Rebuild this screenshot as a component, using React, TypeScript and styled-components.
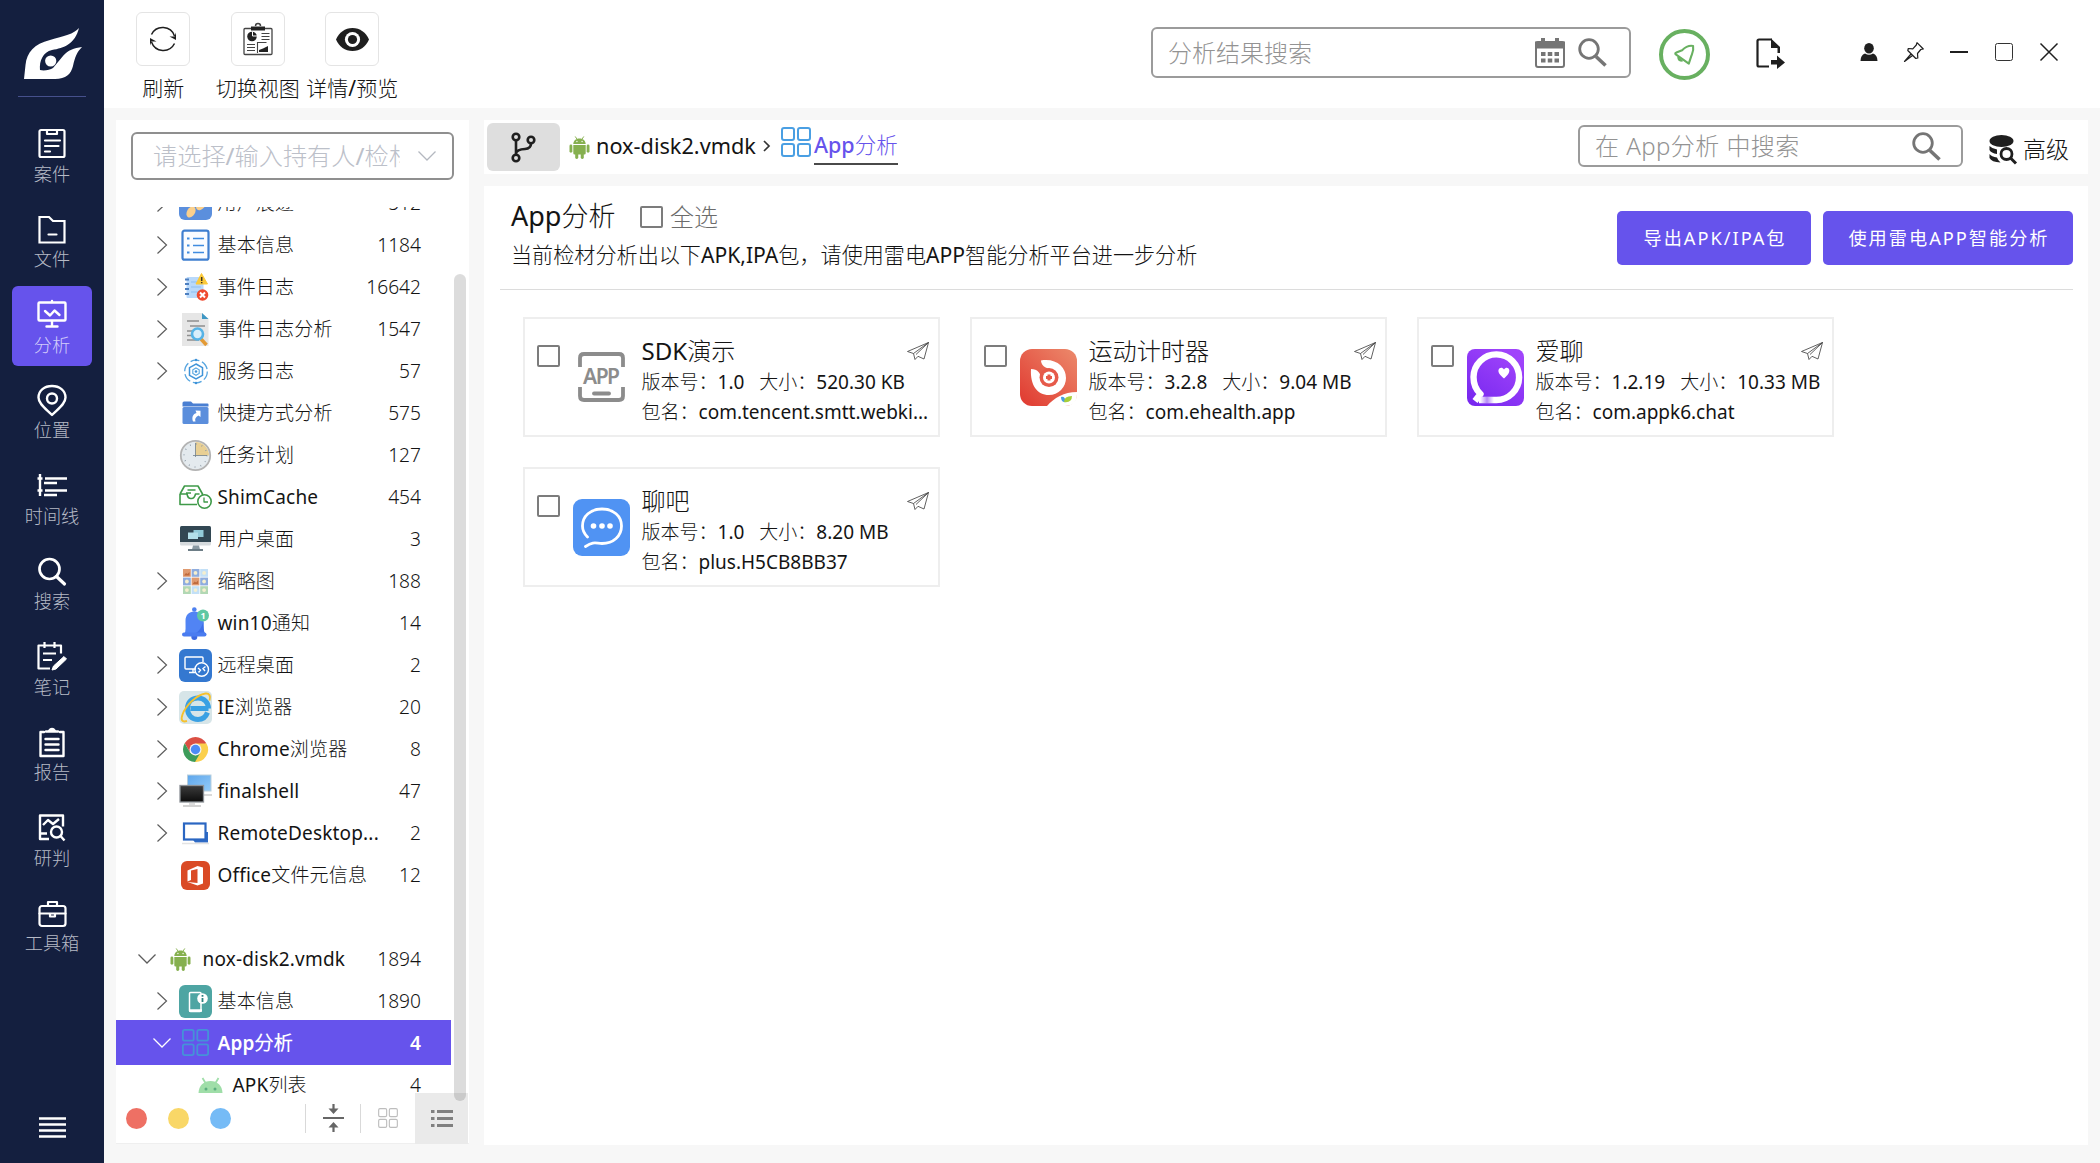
import React from "react";
import styled, { createGlobalStyle, css } from "styled-components";

const CJK = `"Noto Sans", "Noto Sans CJK SC Light", "Noto Sans CJK SC", sans-serif`;
const PURPLE = "#6653ec";

const Global = createGlobalStyle`
  * { box-sizing: border-box; }
  body { margin: 0; background: #f7f7f7; overflow: hidden; font-family: ${CJK}; color: #141414; }
  svg { display: block; flex: none; overflow: visible; }
`;

const Shell = styled.div`
  display: flex;
  width: 2100px;
  height: 1163px;
`;

/* ---------- left navigation ---------- */
const Nav = styled.nav`
  width: 104px;
  height: 100%;
  background: #141f3f;
  display: flex;
  flex-direction: column;
  align-items: center;
  padding: 28px 12px 25px;
`;
const LogoSlot = styled.div`
  padding-left: 2px;
`;
const NavRule = styled.div`
  width: 68px;
  height: 1px;
  margin: 17px 0 18px;
  background: #46508c;
`;
const NavList = styled.div`
  display: flex;
  flex-direction: column;
  gap: 5.5px;
  flex: 1;
`;
const NavItem = styled.div<{ $active?: boolean }>`
  width: 80px;
  height: 80px;
  border-radius: 6px;
  padding-top: 13px;
  display: flex;
  flex-direction: column;
  align-items: center;
  background: ${(p) => (p.$active ? PURPLE : "transparent")};
  color: #fff;
`;
const NavLabel = styled.span<{ $active?: boolean }>`
  margin-top: 0.7px;
  font-size: 18.2px;
  line-height: 28px;
  white-space: nowrap;
  color: ${(p) => (p.$active ? "#d2ccfa" : "#b6bac6")};
`;

/* ---------- top header ---------- */
const Body = styled.div`
  flex: 1;
  min-width: 0;
  display: flex;
  flex-direction: column;
`;
const Header = styled.header`
  height: 108px;
  background: #fff;
  display: flex;
  padding: 12px 29px 0 12px;
`;
const Tool = styled.div`
  width: 94.5px;
  display: flex;
  flex-direction: column;
  align-items: center;
`;
const ToolBox = styled.div`
  width: 54px;
  height: 54px;
  border: 1px solid #e4e4e4;
  border-radius: 6px;
  display: grid;
  place-items: center;
`;
const ToolLabel = styled.span`
  margin-top: 8px;
  font-size: 21px;
  line-height: 28px;
  white-space: nowrap;
`;
const HeaderRight = styled.div`
  margin-left: auto;
  display: flex;
  align-items: flex-start;
`;
const SearchField = styled.div<{ $w: number; $h: number; $pl: number; $pr: number }>`
  width: ${(p) => p.$w}px;
  height: ${(p) => p.$h}px;
  padding: 0 ${(p) => p.$pr}px 0 ${(p) => p.$pl}px;
  border: 2px solid #9b9b9b;
  border-radius: 6px;
  display: flex;
  align-items: center;
  font-size: 24px;
  color: #939393;
  svg { color: #757575; }
`;
const FieldText = styled.span<{ $ls?: number }>`
  flex: 1;
  white-space: nowrap;
  line-height: 34px;
  font-weight: 300;
  letter-spacing: ${(p) => p.$ls ?? 0}px;
`;
const HeaderSearch = styled.div`
  padding-top: 15px;
`;
const BellRing = styled.div`
  width: 51px;
  height: 51px;
  margin: 17px 46px 0 28px;
  border: 4.5px solid #68b060;
  border-radius: 50%;
  display: grid;
  place-items: center;
  color: #68b060;
`;
const ExportButton = styled.div`
  padding-top: 26px;
  width: 90px;
`;
const WindowButtons = styled.div`
  display: flex;
  padding-top: 25px;
  color: #1f1f1f;
`;
const WinButton = styled.div`
  width: 45px;
  height: 30px;
  display: grid;
  place-items: center;
`;

/* ---------- workspace ---------- */
const Workspace = styled.div`
  flex: 1;
  display: flex;
  gap: 15px;
  padding: 12px 12px 18px;
`;
const Side = styled.aside`
  position: relative;
  width: 353px;
  height: 1024px;
  background: #fff;
  display: flex;
  flex-direction: column;
`;
const HolderSelect = styled.div`
  margin: 12px 15px 27px;
  height: 48px;
  padding: 0 16px 0 20px;
  border: 2px solid #8f8f8f;
  border-radius: 6px;
  display: flex;
  align-items: center;
  justify-content: space-between;
  color: #b4b8c0;
`;
const HolderText = styled.span`
  width: 247px;
  overflow: hidden;
  white-space: nowrap;
  font-size: 24.200px;
  line-height: 36px;
  color: #bcc0c9;
`;
const Tree = styled.div`
  height: 886px;
  overflow: hidden;
`;
const TreeBody = styled.div`
  width: 335px;
  margin-top: -25px;
`;
const TreeRow = styled.div<{ $active?: boolean }>`
  height: 42px;
  padding-right: 30px;
  display: flex;
  align-items: center;
  font-size: 19px;
  line-height: 28px;
  ${(p) =>
    p.$active &&
    css`
      height: 45px;
      margin: -2px 0 -1px;
      background: ${PURPLE};
      color: #fff;
      font-weight: 600;
    `}
`;
const Caret = styled.span<{ $w: number }>`
  width: ${(p) => p.$w}px;
  display: flex;
  justify-content: flex-end;
`;
const NodeIcon = styled.span<{ $ml: number; $w: number }>`
  width: ${(p) => p.$w}px;
  margin-left: ${(p) => p.$ml}px;
  display: flex;
  justify-content: center;
`;
const NodeName = styled.span<{ $ml: number }>`
  margin-left: ${(p) => p.$ml + 0.5}px;
  white-space: nowrap;
  letter-spacing: 0.18px;
`;
const NodeCount = styled.span<{ $active?: boolean }>`
  margin-left: auto;
  font-size: 19.2px;
  font-weight: ${(p) => (p.$active ? 600 : 300)};
`;
const Thumb = styled.div`
  position: absolute;
  left: 338px;
  top: 154px;
  width: 12px;
  height: 827px;
  border-radius: 6px;
  background: rgba(0, 0, 0, 0.137);
`;
const Footer = styled.div`
  height: 51px;
  display: flex;
  align-items: center;
  border-bottom: 1px solid #efefef;
`;
const Dot = styled.span<{ $c: string }>`
  width: 21px;
  height: 21px;
  margin-left: 10px;
  margin-right: 11px;
  border-radius: 50%;
  background: ${(p) => p.$c};
`;
const FootSpace = styled.span`
  flex: 1;
`;
const FootCell = styled.span<{ $w: number }>`
  width: ${(p) => p.$w}px;
  height: 29px;
  display: grid;
  place-items: center;
  border-left: 1px solid #d9d9d9;
`;
const ListToggle = styled.span`
  width: 53px;
  height: 51px;
  margin-right: 1px;
  display: grid;
  place-items: center;
  background: #eaeaea;
  color: #808080;
`;

/* ---------- content ---------- */
const Content = styled.main`
  flex: 1;
  display: flex;
  flex-direction: column;
  gap: 12px;
`;
const CrumbBar = styled.div`
  height: 54px;
  padding: 0 19px 0 3px;
  background: #fff;
  display: flex;
  align-items: center;
`;
const BranchButton = styled.div`
  width: 73px;
  height: 48px;
  margin-right: 9px;
  border-radius: 6px;
  background: #dedede;
  display: grid;
  place-items: center;
`;
const Crumb = styled.span`
  margin: -2px 7px 0 6px;
  font-size: 21.7px;
  line-height: 30px;
`;
const CrumbCurrent = styled.span`
  margin: 3px 0 0 3px;
  height: 33px;
  font-size: 21.5px;
  line-height: 26px;
  border-bottom: 2px solid #4a4a4a;
  color: ${PURPLE};
  b { font-weight: 500; }
`;
const CrumbGrid = styled.span`
  margin: -10px 0 0 10px;
`;
const CrumbSearch = styled.div`
  margin: -2px 26px 0 auto;
`;
const Advanced = styled.div`
  display: flex;
  align-items: center;
  gap: 6px;
  font-size: 23px;
  line-height: 32px;
  padding-top: 4px;
`;
const Panel = styled.section`
  flex: 1;
  padding: 0 15px 0 16px;
  background: #fff;
`;
const PanelHead = styled.div`
  height: 104px;
  display: flex;
  justify-content: space-between;
  padding: 12px 0 0 11px;
  border-bottom: 1px solid #dcdcdc;
`;
const TitleRow = styled.div`
  display: flex;
  align-items: center;
  height: 38px;
`;
const Title = styled.h1`
  margin: -3px 25px 0 0;
  font-size: 27px;
  line-height: 36px;
  font-weight: 400;
`;
const Box = styled.span`
  width: 22.5px;
  height: 22.5px;
  flex: none;
  border: 2px solid #7c7c7c;
  border-radius: 2px;
`;
const AllLabel = styled.span`
  margin-left: 7px;
  font-size: 24px;
  line-height: 34px;
  color: #6c6c6c;
`;
const Hint = styled.p`
  margin: 4px 0 0;
  font-size: 21.120px;
  line-height: 30px;
`;
const Actions = styled.div`
  display: flex;
  gap: 12px;
  padding-top: 13px;
`;
const Action = styled.button<{ $w: number }>`
  width: ${(p) => p.$w}px;
  height: 54px;
  padding: 0 0 0 2px;
  border: 0;
  border-radius: 5px;
  background: ${PURPLE};
  color: #fff;
  font: 400 18.200px/26px "Noto Sans", "Noto Sans CJK SC", sans-serif;
  letter-spacing: 2px;
`;
const Cards = styled.div`
  display: grid;
  grid-template-columns: repeat(3, 417px);
  gap: 30px;
  padding: 27px 0 0 23px;
`;
const Card = styled.article`
  height: 120px;
  border: 2px solid #eee;
  display: flex;
  padding: 0 9px 0 12px;
  align-items: flex-start;
  ${Box} { margin-top: 25.5px; }
`;
const AppIcon = styled.span`
  width: 57px;
  margin: 30px 12px 0 13px;
`;
const CardText = styled.div`
  flex: 1;
  min-width: 0;
  padding-top: 15px;
  font-size: 19px;
  line-height: 30.2px;
  white-space: nowrap;
`;
const CardTop = styled.div`
  display: flex;
  justify-content: space-between;
  align-items: center;
  height: 33px;
`;
const CardName = styled.span`
  font-size: 24.1px;
  line-height: 34px;
`;
const Size = styled.span`
  margin-left: 15px;
`;

type P = { s?: number };
const line = (w: number) => ({
  fill: "none",
  stroke: "currentColor",
  strokeWidth: w,
  strokeLinecap: "round" as const,
  strokeLinejoin: "round" as const,
});

const Logo = () => (
  <svg width="58" height="51" viewBox="0 0 58 51" fill="#fff">
    <path d="M55 0C50 6 40 8 26 12C10 16 3 24 1.5 37L0 51H31C42 51 47 46 49 38C51 29 53 24 58 19C50 20 44 22 39 28L29 40C26 42 20 43 16 42C15 33 19 24 28 22C40 20 51 16 55 0Z" />
    <circle cx="26.7" cy="33" r="5.6" />
  </svg>
);

const navIcons: Record<string, React.ReactNode> = {
  案件: (
    <g {...line(2.2)}>
      <rect x="2.5" y="2" width="25" height="27" rx="1.5" />
      <path d="M10 2v4h10v-4M8 12.5h15M8 18h13.500M8 23.500h5" />
    </g>
  ),
  文件: (
    <g {...line(2.2)} strokeLinejoin="miter">
      <path d="M2.500 3h9.500l4 4h11.500v21.500h-25zM11.500 20.500h8" />
    </g>
  ),
  分析: (
    <g {...line(2.4)}>
      <rect x="1.500" y="3.500" width="27" height="18" rx="1" />
      <path d="M15 2v1M15 22v5M9.500 27.500h11M8 12l5 4.500l4.500-5l5 4.500" />
    </g>
  ),
  位置: (
    <g {...line(2.4)}>
      <path d="M15 30C9 24 1.500 19 1.500 12.500C1.500 5.500 7.500 1 15 1S28.500 5.500 28.500 12.500C28.500 19 21 24 15 30Z" />
      <circle cx="15" cy="13.500" r="5" />
    </g>
  ),
  时间线: (
    <g {...line(2.7)} strokeLinecap="butt">
      <path d="M3 4v22" strokeWidth="2.400" />
      <path d="M0.500 8.500h5M0.500 20.500h5M8 8.500h22M7 13h13M8 20.500h22M7 25h13" />
    </g>
  ),
  搜索: (
    <g {...line(2.7)}>
      <circle cx="12.500" cy="13" r="10" />
      <path d="M19.500 20.500l8 7.500" strokeWidth="3.200" />
    </g>
  ),
  笔记: (
    <g {...line(2.2)} strokeLinecap="butt">
      <path d="M13 27.500H1.500v-23H24v8M7.500 1v6M17.500 1v6M6 12.500h13M6 19h9" />
      <path d="M27 15.500l2.500 2.500L19 28l-4 1l1.500-4z" fill="#fff" strokeWidth="1" />
    </g>
  ),
  报告: (
    <g {...line(2.4)}>
      <path d="M7 5H3.500v24h23v-24H23M9 4.500h12M12 4q3-4 6 0M8.500 12h13M8.500 17.500h13M8.500 23h13" />
    </g>
  ),
  研判: (
    <g {...line(2.4)} strokeLinecap="butt">
      <path d="M12 27H3v-23.500h23v11M6 13l5-5l5 4l6-5M3 21.500h7" />
      <circle cx="19.500" cy="20" r="5.500" />
      <path d="M23.500 24l4 4.500" />
    </g>
  ),
  工具箱: (
    <g {...line(2.2)}>
      <rect x="2.500" y="8" width="26" height="20" rx="2.500" />
      <path d="M11 8v-4h9v4M2.500 15.500h26M13 16v2.500h5v-2.500" />
    </g>
  ),
};

const SearchIcon = ({ s = 29 }: P) => (
  <svg width={s} height={s} viewBox="0 0 29 29" fill="none" stroke="currentColor">
    <circle cx="11" cy="11" r="9.300" strokeWidth="2.800" />
    <path d="M18 18.500l9.500 9" strokeWidth="3.600" />
  </svg>
);

const Android = ({ s = 22 }: P) => (
  <svg width={s} height={s * 1.09} viewBox="0 0 22 24" fill="#86b04f">
    <path d="M4.500 8.500C4.500 5 7 2.500 11 2.500S17.500 5 17.500 8.500zM4.500 9.500h13v8.500q0 1.500-1.500 1.500H6q-1.500 0-1.500-1.500z" />
    <rect x="0.500" y="9" width="3" height="8.500" rx="1.500" />
    <rect x="18.500" y="9" width="3" height="8.500" rx="1.500" />
    <rect x="6.500" y="17" width="3.200" height="7" rx="1.500" />
    <rect x="12.300" y="17" width="3.200" height="7" rx="1.500" />
    <path d="M6.500 0.500l2 3M15.500 0.500l-2 3" stroke="#86b04f" />
    <circle cx="8.300" cy="5.800" r="0.700" fill="#fff" />
    <circle cx="13.700" cy="5.800" r="0.700" fill="#fff" />
  </svg>
);

const FourBoxes = ({ s = 30, c = "#4a9fe3", w = 2 }: P & { c?: string; w?: number }) => (
  <svg width={s} height={s} viewBox="0 0 30 30" fill="none" stroke={c} strokeWidth={w}>
    <rect x="1" y="1" width="12" height="12" rx="2" />
    <rect x="17" y="1" width="12" height="12" rx="2" />
    <rect x="1" y="17" width="12" height="12" rx="2" />
    <rect x="17" y="17" width="12" height="12" rx="2" />
  </svg>
);

const Chevron = ({ down, c = "#5c5c5c" }: { down?: boolean; c?: string }) =>
  down ? (
    <svg width="18" height="10" viewBox="0 0 18 10" fill="none" stroke={c} strokeWidth="1.300">
      <path d="M0.500 0.500L9 9L17.500 0.500" />
    </svg>
  ) : (
    <svg width="10" height="18" viewBox="0 0 10 18" fill="none" stroke={c} strokeWidth="1.200">
      <path d="M0.500 0.500L9.500 9L0.500 17.500" />
    </svg>
  );

const I = ({ children }: { children: React.ReactNode }) => (
  <svg width="33" height="33" viewBox="0 0 33 33" fill="none">
    {children}
  </svg>
);

const icons: Record<string, React.ReactNode> = {
  trace: (
    <I>
      <rect width="33" height="33" rx="6" fill="#5b8fdd" />
      <ellipse cx="12" cy="25" rx="4" ry="6" transform="rotate(30 12 25)" fill="#fbd08c" />
      <ellipse cx="22" cy="18" rx="4" ry="6" transform="rotate(40 22 18)" fill="#fbd08c" />
    </I>
  ),
  info: (
    <I>
      <rect x="3.500" y="1.700" width="26" height="29" rx="2" stroke="#3f7fd0" strokeWidth="2.200" fill="#fafcff" />
      <path d="M14 9.500h11M14 16.500h11M14 23.500h11" stroke="#3f8be0" strokeWidth="1.500" />
      <path d="M8 9.500h2.500M8 16.500h2.500M8 23.500h2.500" stroke="#3f8be0" strokeWidth="2" />
    </I>
  ),
  event: (
    <I>
      <rect x="7.500" y="6" width="17" height="21" rx="1" fill="#b9d9fb" />
      <path d="M12 11h8M12 16h10M12 21h8" stroke="#9cc7f5" strokeWidth="1.500" />
      <path d="M6 8.500h4M6 13h4M6 18h4M6 23h4" stroke="#4d7fc0" strokeWidth="1.800" />
      <path d="M22.500 2.500L28.500 13H17z" fill="#fbc93a" stroke="#fbc93a" strokeLinejoin="round" />
      <path d="M22.700 6v4M22.700 11v1.300" stroke="#3c3420" strokeWidth="1.500" />
      <circle cx="23.500" cy="24" r="5.800" fill="#ef4b30" />
      <path d="M21 21.500l5 5M26 21.500l-5 5" stroke="#fff" strokeWidth="2" />
    </I>
  ),
  eventFind: (
    <I>
      <path d="M3 0h20l6.500 6v27H3z" fill="#e6e6e6" />
      <path d="M23 0v6h6.500z" fill="#3f97c4" />
      <path d="M8 8h12M11 13h15M8 18h9M8 22.500h9M8 27h12" stroke="#8f8f8f" strokeWidth="1.300" />
      <path d="M22 26l5.500 6" stroke="#e39a35" strokeWidth="3.500" />
      <circle cx="18.500" cy="21" r="5.500" stroke="#56b3e6" strokeWidth="2.600" fill="#d8eefb" />
    </I>
  ),
  service: (
    <I>
      <circle cx="17" cy="16.500" r="11.300" stroke="#58a6e0" strokeWidth="1.300" strokeDasharray="9 2.830" />
      <path d="M17 9l6.500 3.700v7.600l-6.500 3.700l-6.500-3.700v-7.600z" stroke="#3f93d8" strokeWidth="1.500" />
      <path d="M17 13l3.200 1.800v3.700l-3.200 1.800l-3.200-1.800v-3.700z" stroke="#58a6e0" strokeWidth="1.100" />
      <circle cx="17" cy="16.500" r="1.300" fill="#3f93d8" />
      <circle cx="17" cy="5" r="1.300" fill="#3f93d8" />
      <circle cx="17" cy="28" r="1.300" fill="#3f93d8" />
    </I>
  ),
  shortcut: (
    <I>
      <path d="M3.500 6q0-1.500 1.500-1.500h7l2 2h14.500q1 0 1 1v2h-26z" fill="#4a7fd2" />
      <rect x="3.500" y="10" width="26" height="17" rx="1.500" fill="#5b8edc" />
      <path d="M14 24.500C12.500 20 14 17 17.500 16L16.500 13.500L21.500 13.800V20L19.500 18.500C16.500 20 15.500 22 16.500 24.500z" fill="#fff" />
    </I>
  ),
  task: (
    <I>
      <circle cx="16.500" cy="16.500" r="14.700" fill="#e4eaee" stroke="#b3b3b3" strokeWidth="1.800" />
      <path d="M16.500 16.500V3A13.500 13.500 0 0 1 30 16.500z" fill="#e8cf94" />
      <circle cx="16.500" cy="16.500" r="11.500" stroke="#8d9aa5" strokeWidth="1.500" strokeDasharray="0.800 5.220" />
      <path d="M16.500 4v14M14 16.500h14" stroke="#71808c" strokeWidth="0.800" />
    </I>
  ),
  shim: (
    <I>
      <g stroke="#3f9a49" strokeWidth="1.600" strokeLinejoin="round">
        <path d="M1 13l4.500-8h13.500l4.500 8v3M1 13v10.500h17M1 13h7q1 5 4.500 4.500q3 0 4-4.500h4M8.500 9h8M7 12h5" />
        <circle cx="25.500" cy="20.500" r="6.700" fill="#fff" />
        <path d="M25 16.500v4.500h4" strokeWidth="1.300" />
      </g>
    </I>
  ),
  desktop: (
    <I>
      <rect x="1" y="3" width="31" height="17.500" rx="1.500" fill="#324753" />
      <path d="M1 19h31v2q0 1.500-1.500 1.500h-28q-1.500 0-1.500-1.500z" fill="#d5dadd" />
      <rect x="14.500" y="7" width="10" height="7" fill="#93cbd9" />
      <rect x="9" y="9.500" width="10" height="6.500" fill="#b4e0ea" />
      <path d="M14 22.500h6l1 4H13z" fill="#8b9aa3" />
      <path d="M9 27h15" stroke="#5d6f79" strokeWidth="1.800" />
    </I>
  ),
  thumbs: (
    <I>
      {["#df9a70", "#8fadde", "#c3e0f7", "#8fadde", "#df9a70", "#8fadde", "#b2d8b4", "#c3e0f7", "#b2d8b4"].map((c, i) => (
        <g key={i} transform={`translate(${4 + (i % 3) * 8.600} ${4 + Math.floor(i / 3) * 8.600})`}>
          <rect width="7.800" height="7.800" fill={c} />
          {i % 4 === 0 && i < 5 ? (
            <path d="M1 6.500l2-2.500l1.500 1l2-2v3.500z" fill="#c06a3c" />
          ) : (
            <circle cx="3.900" cy="3.900" r="1.900" fill="#f5efcf" />
          )}
        </g>
      ))}
    </I>
  ),
  bell: (
    <I>
      <circle cx="15.300" cy="2.500" r="2.300" fill="#4d80f0" />
      <circle cx="15.300" cy="30" r="3" fill="#3c68e0" />
      <path d="M5.500 27C7 24 6.500 20 6.500 14C6.500 8 10 4.500 15.300 4.500S24.500 8 24.500 14C24.500 20 24.500 24 26 27z" fill="#5184f4" />
      <path d="M24.500 14C24.500 20 24.500 24 26 27H15C20 25 23 20 24.500 14z" fill="#3f70e8" />
      <rect x="3" y="25.500" width="24.500" height="4" rx="2" fill="#4a7cf0" />
      <circle cx="24" cy="8.500" r="6" fill="#5ec8a4" />
      <text x="24" y="12" fontSize="9" fontWeight="700" fill="#fff" textAnchor="middle">1</text>
    </I>
  ),
  remote: (
    <I>
      <rect width="33" height="33" rx="6" fill="#3478d0" />
      <g stroke="#fff" strokeWidth="1.400">
        <path d="M17 20H7q-1 0-1-1V9q0-1 1-1h16q1 0 1 1v4M10 23.500h7M14 20v3" />
        <circle cx="22.700" cy="20.500" r="6.800" />
        <path d="M19 19l2.500 2l-2 2.500M26.500 17.500l-2.500 2l2 2.500" />
      </g>
    </I>
  ),
  ie: (
    <I>
      <rect width="33" height="33" rx="5" fill="#d7e5e8" />
      <path d="M29.500 17.500H11.500M28.500 21.500C27 25.500 23.500 28.500 19 28.500C13 28.500 8.500 24 8.500 17.500S13 7 19 7S29.500 11.500 29.500 17.500" stroke="#3aa0e3" strokeWidth="5" />
      <path d="M30.500 9.500C32 5.500 30.500 2 26.500 2.500C17 4 6.500 15 3.500 23.500C1.500 29 3 31.500 8 30" stroke="#f6c12d" strokeWidth="1.900" />
    </I>
  ),
  chrome: (
    <I>
      <path d="M16.500 16.500L5.700 10.200A12.500 12.500 0 0 1 27.300 10.200z" fill="#db4f43" />
      <path d="M5.700 10.200L27.300 10.200H16.500L11 19.500z" fill="#db4f43" />
      <path d="M16.500 10.500H27.500A12.500 12.500 0 0 1 16 29z" fill="#fbd04c" />
      <path d="M5.700 10.200A12.500 12.500 0 0 0 16 29L21.500 19.500L16.500 22.500L11 19.500z" fill="#3d9c5a" />
      <circle cx="16.500" cy="16.500" r="6" fill="#f2f2f2" />
      <circle cx="16.500" cy="16.500" r="4.700" fill="#4c8bf5" />
    </I>
  ),
  finalshell: (
    <I>
      <defs>
        <linearGradient id="screenBlue" x1="0" y1="0" x2="1" y2="1">
          <stop offset="0" stopColor="#5ea6ec" />
          <stop offset="1" stopColor="#93cbf7" />
        </linearGradient>
        <linearGradient id="screenBlack" x1="0" y1="0" x2="0" y2="1">
          <stop offset="0" stopColor="#3c3c3c" />
          <stop offset="1" stopColor="#0c0c0c" />
        </linearGradient>
      </defs>
      <rect x="8.500" y="0" width="23.500" height="16" fill="url(#screenBlue)" stroke="#b9cfdd" />
      <path d="M24 20h9" stroke="#ccc" strokeWidth="1.500" />
      <rect x="1" y="10.500" width="23.500" height="16.500" fill="url(#screenBlack)" stroke="#8d9297" strokeWidth="1.300" />
      <path d="M10 28h6v2h-6z" fill="#ddd" />
      <path d="M4 31h18" stroke="#c4c4c4" strokeWidth="1.500" />
    </I>
  ),
  rdp: (
    <I>
      <path d="M8 15h21v10.500H16z" fill="#2f6bc6" />
      <rect x="5" y="6.500" width="21.500" height="16" fill="#fff" stroke="#2a66c2" strokeWidth="2.200" />
      <path d="M3 26.500h27" stroke="#e3e3e3" strokeWidth="1.500" />
    </I>
  ),
  office: (
    <I>
      <rect x="2" y="2" width="29" height="29" rx="6" fill="#da4a25" />
      <path d="M8.500 11.500L18.500 7l5.500 1.500v16L18.500 26.500L8.500 23l10 1V10l-6.500 1.500v9.500l-3.500 1.500z" fill="#fff" />
    </I>
  ),
  phone: (
    <I>
      <rect width="33" height="33" rx="6" fill="#4ea5a3" />
      <rect x="10.500" y="7.500" width="11.500" height="19" rx="1" stroke="#fff" strokeWidth="1.500" />
      <path d="M10 25.500h13" stroke="#fff" strokeWidth="2.500" />
      <circle cx="23.500" cy="13.500" r="5.300" fill="#fff" />
      <path d="M23.500 10v1.800M23.500 13v4" stroke="#2c8280" strokeWidth="1.800" />
    </I>
  ),
};

const Robot = () => (
  <svg width="25" height="17" viewBox="0 0 25 17" fill="#9fdea8">
    <path d="M0.500 16.500C0.500 9 5.500 4 12.500 4S24.500 9 24.500 16.500z" />
    <path d="M4.500 1l3 5M20.500 1l-3 5" stroke="#9fdea8" strokeWidth="1.800" />
    <circle cx="8" cy="12" r="1.500" fill="#5cae7f" />
    <circle cx="17" cy="12" r="1.500" fill="#5cae7f" />
  </svg>
);

const Plane = () => (
  <svg width="22" height="18" viewBox="0 0 22 18" fill="none" stroke="#444" strokeWidth="0.850" strokeLinejoin="round">
    <path d="M21.500 0.500L0.500 9.500L6.500 11.500L21.500 0.500L17 17L11 14.300M21.500 0.500L9 12.500M6.500 11.500L8 17.500L11 14.300" />
  </svg>
);

const appIcons = [
  <svg width="57" height="57" viewBox="0 0 57 57" key="a">
    <g fill="none" stroke="#8c8c8c" strokeWidth="3.800">
      <path d="M7 18V9q0-4 4-4h35q4 0 4 4v9M7 38v9q0 4 4 4h35q4 0 4-4V38" />
      <path d="M21 44.500h15" strokeLinecap="round" />
    </g>
    <text x="28.500" y="34.500" fontSize="21" fontWeight="600" fill="#8c8c8c" textAnchor="middle" textLength="37">APP</text>
  </svg>,
  <svg width="57" height="57" viewBox="0 0 57 57" key="b">
    <defs>
      <linearGradient id="red" x1="0" y1="1" x2="1" y2="0">
        <stop offset="0" stopColor="#e0382f" />
        <stop offset="1" stopColor="#ec8a6c" />
      </linearGradient>
    </defs>
    <rect width="57" height="57" rx="12" fill="url(#red)" />
    <path d="M27 57C34 49 44 43 57 43V45q0 12-12 12z" fill="#fff" />
    <path d="M11 20C18 20 20 24 21.500 29A7.500 7.500 0 1 0 31 20.500C25 19 21 16 21 11.500C36 9 46 18 46 29A17 17 0 0 1 29 46C17 46 10 36 11 20z" fill="#fff" />
    <circle cx="29" cy="28.500" r="9.500" fill="#e65a4a" />
    <circle cx="29" cy="28.500" r="6" fill="#fff" />
    <path d="M29 25.500v6M26 28.500h6" stroke="#e65a4a" strokeWidth="3" />
    <path d="M41 48q4-1 5 5q-5 1-5-5z" fill="#4a9fe0" />
    <path d="M44 53q0-6 8-6q0 7-8 6z" fill="#a8cf38" />
  </svg>,
  <svg width="57" height="57" viewBox="0 0 57 57" key="c">
    <defs>
      <linearGradient id="violet" x1="0" y1="1" x2="0.700" y2="0">
        <stop offset="0" stopColor="#7526ee" />
        <stop offset="1" stopColor="#a044fb" />
      </linearGradient>
      <linearGradient id="tail" x1="0" x2="1">
        <stop offset="0" stopColor="#7a2cf0" stopOpacity="0" />
        <stop offset="0.500" stopColor="#7a2cf0" stopOpacity="0.550" />
        <stop offset="1" stopColor="#7a2cf0" stopOpacity="0" />
      </linearGradient>
    </defs>
    <rect width="57" height="57" rx="8" fill="url(#violet)" />
    <path d="M8 52L13.500 45C8 40 6.500 34 6.500 28A22.800 22.800 0 1 1 29 51H12" fill="none" stroke="#fff" strokeWidth="6.400" strokeLinejoin="round" />
    <path d="M13 47.500h14v7H13z" fill="url(#tail)" />
    <path d="M37 29.500C33 26 31 24 31.500 21C32.500 18 35.500 18 37 20.500C38.500 18 41.500 18 42.300 21C42.500 24 41 26 37 29.500z" fill="#fff" />
  </svg>,
  <svg width="57" height="57" viewBox="0 0 57 57" key="d">
    <rect width="57" height="57" rx="9" fill="#5093f3" />
    <path d="M14.500 38C11 34.500 9.500 31 9.500 27C9.500 17 17.500 10 29 10S48.500 17 48.500 27S40.500 44.500 29 44.500C23 44.500 21 42 12.500 47.500" fill="none" stroke="#fff" strokeWidth="2.800" strokeLinecap="round" />
    <g fill="#fff">
      <circle cx="20.500" cy="27" r="2.800" />
      <circle cx="29" cy="27" r="2.800" />
      <circle cx="37" cy="27" r="2.800" />
    </g>
  </svg>,
];

type Node = { i?: string; n: string; c?: number; open?: boolean };
const nodes: Node[] = [
  { i: "trace", n: "用户痕迹", c: 512, open: true },
  { i: "info", n: "基本信息", c: 1184, open: true },
  { i: "event", n: "事件日志", c: 16642, open: true },
  { i: "eventFind", n: "事件日志分析", c: 1547, open: true },
  { i: "service", n: "服务日志", c: 57, open: true },
  { i: "shortcut", n: "快捷方式分析", c: 575 },
  { i: "task", n: "任务计划", c: 127 },
  { i: "shim", n: "ShimCache", c: 454 },
  { i: "desktop", n: "用户桌面", c: 3 },
  { i: "thumbs", n: "缩略图", c: 188, open: true },
  { i: "bell", n: "win10通知", c: 14 },
  { i: "remote", n: "远程桌面", c: 2, open: true },
  { i: "ie", n: "IE浏览器", c: 20, open: true },
  { i: "chrome", n: "Chrome浏览器", c: 8, open: true },
  { i: "finalshell", n: "finalshell", c: 47, open: true },
  { i: "rdp", n: "RemoteDesktop...", c: 2, open: true },
  { i: "office", n: "Office文件元信息", c: 12 },
];

const apps = [
  { name: "SDK演示", v: "1.0", size: "520.30 KB", pkg: "com.tencent.smtt.webki..." },
  { name: "运动计时器", v: "3.2.8", size: "9.04 MB", pkg: "com.ehealth.app" },
  { name: "爱聊", v: "1.2.19", size: "10.33 MB", pkg: "com.appk6.chat" },
  { name: "聊吧", v: "1.0", size: "8.20 MB", pkg: "plus.H5CB8BB37" },
];

const IconGap = styled.span`
  width: 13.5px;
`;

const Branch = ({ n }: { n: Node }) => (
  <TreeRow>
    <Caret $w={51}>{n.open && <Chevron />}</Caret>
    <NodeIcon $ml={12} $w={33}>{icons[n.i!]}</NodeIcon>
    <NodeName $ml={5}>{n.n}</NodeName>
    <NodeCount>{n.c}</NodeCount>
  </TreeRow>
);

export default function App() {
  return (
    <>
      <Global />
      <Shell>
        <Nav>
          <LogoSlot><Logo /></LogoSlot>
          <NavRule />
          <NavList>
            {Object.keys(navIcons).map((k) => (
              <NavItem key={k} $active={k === "分析"}>
                <svg width="30" height="31" viewBox="0 0 30 31">{navIcons[k]}</svg>
                <NavLabel $active={k === "分析"}>{k}</NavLabel>
              </NavItem>
            ))}
          </NavList>
          <svg width="27" height="21" viewBox="0 0 27 21" stroke="#fff" strokeWidth="2.600">
            <path d="M0 1.500h27M0 7.500h27M0 13.500h27M0 19.500h27" />
          </svg>
        </Nav>
        <Body>
          <Header>
            <Tool>
              <ToolBox>
                <svg width="28" height="28" viewBox="0 0 28 28" fill="none" stroke="#1f1f1f" strokeWidth="1.500">
                  <path d="M2.500 9.500A12.500 12.500 0 0 1 25.500 11M25.500 18.500A12.500 12.500 0 0 1 2.500 17" />
                  <path d="M20.500 11.500l6.500 3.500V7.500l-1.500 4zM7.500 16.500l-6.500-3.500v7.500l1.500-4z" fill="#1f1f1f" stroke="none" />
                </svg>
              </ToolBox>
              <ToolLabel>刷新</ToolLabel>
            </Tool>
            <Tool>
              <ToolBox>
                <svg width="30" height="32" viewBox="0 0 30 32" fill="none" stroke="#444">
                  <rect x="1" y="5.500" width="28" height="26" rx="1" strokeWidth="1.300" />
                  <path d="M8 3.500h14v4H8z" fill="#222" stroke="none" />
                  <path d="M12.500 3q0-2.500 2.500-2.500t2.500 2.500" strokeWidth="1.500" />
                  <circle cx="9" cy="13.500" r="4.800" fill="#222" stroke="none" />
                  <path d="M9.500 13V8.500M9.500 13h4.500" stroke="#fff" />
                  <path d="M18.500 10.500h8M18.500 13.500h8M18.500 16.500h8M4 21.500h8M4 24.500h8M4 27.500h8M14.500 19v11M14.500 19.500h9" strokeWidth="1.100" />
                  <path d="M16 29v-2l4-1.500l5-2.500v6z" fill="#222" stroke="none" />
                </svg>
              </ToolBox>
              <ToolLabel>切换视图</ToolLabel>
            </Tool>
            <Tool>
              <ToolBox>
                <svg width="33" height="23" viewBox="0 0 33 23" fill="#1f1f1f">
                  <path d="M0 11.500C3 4.500 9 0 16.500 0S30 4.500 33 11.500C30 18.500 24 23 16.500 23S3 18.500 0 11.500z" />
                  <circle cx="16.500" cy="11.500" r="7.600" fill="#fff" />
                  <circle cx="16.500" cy="11.500" r="4.600" />
                </svg>
              </ToolBox>
              <ToolLabel>详情/预览</ToolLabel>
            </Tool>
            <HeaderRight>
              <HeaderSearch>
                <SearchField $w={480} $h={51} $pl={15} $pr={22}>
                  <FieldText>分析结果搜索</FieldText>
                  <svg width="30" height="30" viewBox="0 0 30 30" fill="none" stroke="currentColor">
                    <rect x="1" y="4" width="28" height="25" rx="2" strokeWidth="2" />
                    <path d="M0 3.500h30v7H0zM6 0h4v5H6zM20 0h4v5h-4z" fill="currentColor" stroke="none" />
                    <path d="M6 16h18M6 22.500h18" strokeWidth="4" strokeDasharray="4.500 2.250" />
                  </svg>
                  <IconGap />
                  <SearchIcon />
                </SearchField>
              </HeaderSearch>
              <BellRing>
                <svg width="21" height="21" viewBox="0 0 22 22" fill="none" stroke="currentColor" strokeWidth="2.200" strokeLinejoin="round">
                  <path d="M20 2C21 7 19 10 18 13L15.500 20.500L1.500 10.500Q1 9.500 2.500 9L8.500 6.500C12 3 15 1 20 2z" />
                  <path d="M4.500 13.500q0 4 4.500 4" fill="currentColor" />
                </svg>
              </BellRing>
              <ExportButton>
                <svg width="29" height="31" viewBox="0 0 29 31" fill="none" stroke="#1f1f1f" strokeWidth="2.200">
                  <path d="M13 28.500H3q-1.500 0-1.500-1.500V3q0-1.500 1.500-1.500h13" />
                  <path d="M15 0.500l9 8.500v6h-2.500v-5H15z" fill="#1f1f1f" stroke="none" />
                  <path d="M15 22h6v-4.500l8 7l-8 6.500v-4.500h-6z" fill="#1f1f1f" stroke="none" />
                </svg>
              </ExportButton>
              <WindowButtons>
                <WinButton>
                  <svg width="18" height="18" viewBox="0 0 18 18" fill="currentColor">
                    <ellipse cx="9" cy="5.200" rx="4.800" ry="5.200" />
                    <path d="M0.500 18Q0.500 12 5 10.500Q9 13 13 10.500Q17.500 12 17.500 18z" />
                  </svg>
                </WinButton>
                <WinButton>
                  <svg width="20" height="20" viewBox="0 0 20 20" fill="none" stroke="currentColor" strokeWidth="1.200" strokeLinejoin="round">
                    <path d="M13 0.700l6.300 6.300l-2.500 0.500l-3.300 4l0.300 4.500l-2 0.500l-8-8l0.500-2l4.500 0.300l3.500-3.800zM7 12L0.500 19.500L8.500 13.500" />
                  </svg>
                </WinButton>
                <WinButton>
                  <svg width="18" height="2"><rect width="18" height="2" fill="#1f1f1f" /></svg>
                </WinButton>
                <WinButton>
                  <svg width="18" height="18"><rect x="0.500" y="0.500" width="17" height="17" rx="2" fill="none" stroke="#333" /></svg>
                </WinButton>
                <WinButton>
                  <svg width="18" height="18" stroke="#1f1f1f" strokeWidth="1.500"><path d="M0.500 0.500l17 17M17.500 0.500l-17 17" /></svg>
                </WinButton>
              </WindowButtons>
            </HeaderRight>
          </Header>
          <Workspace>
            <Side>
              <HolderSelect>
                <HolderText>请选择/输入持有人/检材</HolderText>
                <Chevron down c="#b4b8c0" />
              </HolderSelect>
              <Tree>
                <TreeBody>
                  {nodes.map((n) => <Branch n={n} key={n.n} />)}
                  <TreeRow />
                  <TreeRow>
                    <Caret $w={40}><Chevron down /></Caret>
                    <NodeIcon $ml={13} $w={23}><Android s={21} /></NodeIcon>
                    <NodeName $ml={10}>nox-disk2.vmdk</NodeName>
                    <NodeCount>1894</NodeCount>
                  </TreeRow>
                  <Branch n={{ i: "phone", n: "基本信息", c: 1890, open: true }} />
                  <TreeRow $active>
                    <Caret $w={55}><Chevron down c="#fff" /></Caret>
                    <NodeIcon $ml={8} $w={33}><FourBoxes s={27} c="#4592d8" /></NodeIcon>
                    <NodeName $ml={5}>App分析</NodeName>
                    <NodeCount $active>4</NodeCount>
                  </TreeRow>
                  <TreeRow>
                    <Caret $w={66} />
                    <NodeIcon $ml={12} $w={33}><Robot /></NodeIcon>
                    <NodeName $ml={5}>APK列表</NodeName>
                    <NodeCount>4</NodeCount>
                  </TreeRow>
                </TreeBody>
              </Tree>
              <Footer>
                <Dot $c="#ee7064" />
                <Dot $c="#f9d767" />
                <Dot $c="#75bbf6" />
                <FootSpace />
                <FootCell $w={55}>
                  <svg width="21" height="28" viewBox="0 0 21 28" stroke="#666" strokeWidth="2.200" fill="#666">
                    <path d="M0 14h21M10.500 0v5M10.500 28v-5" />
                    <path d="M5.500 4.500h10l-5 5.500zM5.500 23.500h10l-5-5.500z" stroke="none" />
                  </svg>
                </FootCell>
                <FootCell $w={55}><FourBoxes s={20} c="#bdbdbd" w={1.700} /></FootCell>
                <ListToggle>
                  <svg width="22" height="17" viewBox="0 0 22 17" stroke="currentColor" strokeWidth="2.800">
                    <path d="M0 1.500h3.500M6 1.500h16M0 8.500h3.500M6 8.500h16M0 15.500h3.500M6 15.500h16" />
                  </svg>
                </ListToggle>
              </Footer>
              <Thumb />
            </Side>
            <Content>
              <CrumbBar>
                <BranchButton>
                  <svg width="25" height="31" viewBox="0 0 25 31" fill="none" stroke="#1f1f1f" strokeWidth="2.600">
                    <circle cx="5" cy="5" r="3.300" />
                    <circle cx="5" cy="26" r="3.300" />
                    <circle cx="20" cy="8" r="3.300" />
                    <path d="M5 8.500v14M20 11.500q0 5-6 5.500q-8 0.500-9 4" />
                  </svg>
                </BranchButton>
                <Android s={21} />
                <Crumb>nox-disk2.vmdk</Crumb>
                <svg width="8" height="12" viewBox="0 0 8 12" fill="none" stroke="#333" strokeWidth="1.700">
                  <path d="M1 0l5 5l-5 5" />
                </svg>
                <CrumbGrid><FourBoxes /></CrumbGrid>
                <CrumbCurrent><b>App</b>分析</CrumbCurrent>
                <CrumbSearch>
                  <SearchField $w={385} $h={42} $pl={15} $pr={20}>
                    <FieldText $ls={0.45}>在 App分析 中搜索</FieldText>
                    <SearchIcon />
                  </SearchField>
                </CrumbSearch>
                <Advanced>
                  <svg width="28" height="29" viewBox="0 0 28 29" fill="#1f1f1f">
                    <ellipse cx="12.500" cy="6" rx="12" ry="6" />
                    <path d="M0.500 11q3 3 7.500 3.500v4.500q-6-1-7.500-4zM0.500 19q2 2.500 7.500 3.500q1 3 3.500 5q-9-0.500-11-4.500z" />
                    <circle cx="17.500" cy="19" r="5.500" fill="#fff" stroke="#1f1f1f" strokeWidth="2.800" />
                    <path d="M21.500 23l5.500 5.500" stroke="#1f1f1f" strokeWidth="3" />
                  </svg>
                  高级
                </Advanced>
              </CrumbBar>
              <Panel>
                <PanelHead>
                  <div>
                    <TitleRow>
                      <Title>App分析</Title>
                      <Box />
                      <AllLabel>全选</AllLabel>
                    </TitleRow>
                    <Hint>当前检材分析出以下APK,IPA包，请使用雷电APP智能分析平台进一步分析</Hint>
                  </div>
                  <Actions>
                    <Action $w={194}>导出APK/IPA包</Action>
                    <Action $w={250}>使用雷电APP智能分析</Action>
                  </Actions>
                </PanelHead>
                <Cards>
                  {apps.map((a, i) => (
                    <Card key={a.name}>
                      <Box />
                      <AppIcon>{appIcons[i]}</AppIcon>
                      <CardText>
                        <CardTop>
                          <CardName>{a.name}</CardName>
                          <Plane />
                        </CardTop>
                        <div>版本号：{a.v}<Size>大小：{a.size}</Size></div>
                        <div>包名：{a.pkg}</div>
                      </CardText>
                    </Card>
                  ))}
                </Cards>
              </Panel>
            </Content>
          </Workspace>
        </Body>
      </Shell>
    </>
  );
}
